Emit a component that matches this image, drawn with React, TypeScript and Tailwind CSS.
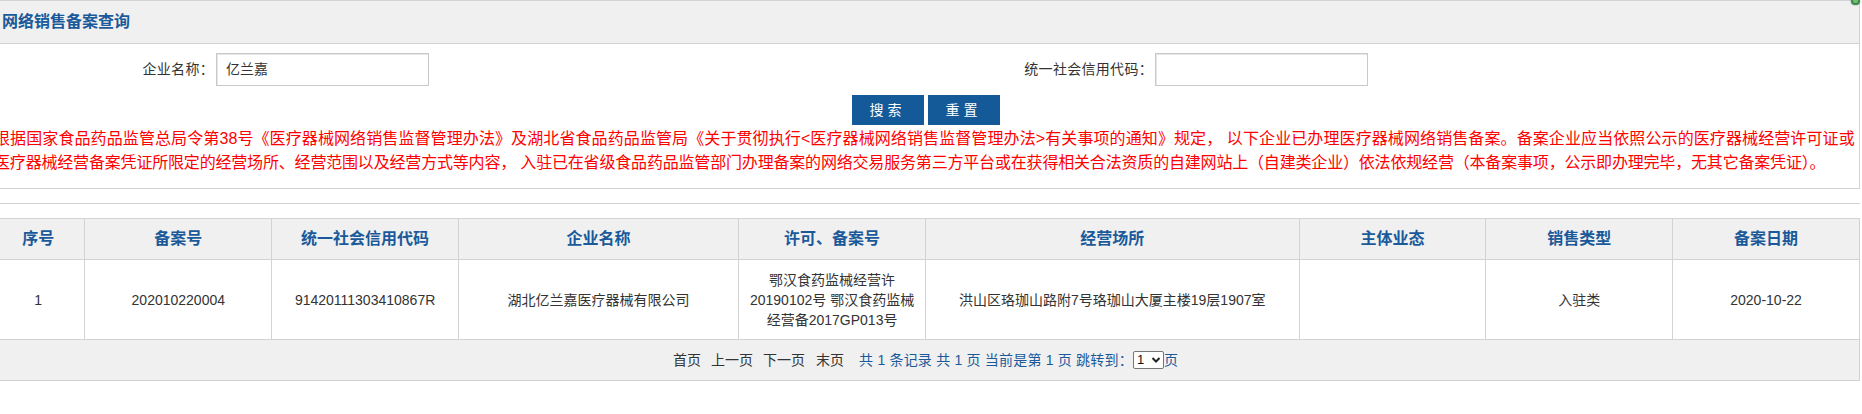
import React from "react";

const font = "font-['Liberation_Sans','Noto_Sans_CJK_SC',sans-serif]";

const columns = [
  { label: "序号", width: "w-[5%]" },
  { label: "备案号", width: "w-[10%]" },
  { label: "统一社会信用代码", width: "w-[10%]" },
  { label: "企业名称", width: "w-[15%]" },
  { label: "许可、备案号", width: "w-[10%]" },
  { label: "经营场所", width: "w-[20%]" },
  { label: "主体业态", width: "w-[10%]" },
  { label: "销售类型", width: "w-[10%]" },
  { label: "备案日期", width: "w-[10%]" },
];

function Field({ label, value, labelWidth }: { label: string; value?: string; labelWidth: string }) {
  return (
    <>
      <div className={`${labelWidth} shrink-0 pr-[2px] text-right text-[14px] leading-[33px] tracking-[0.3px] text-[#333]`}>{label}</div>
      <div className="flex h-[33px] w-[213px] shrink-0 items-center border border-[#c9c9c9] px-[9px] text-[14px] text-[#333] shadow-[inset_1px_1px_0_#e6e6e6]">
        {value}
      </div>
    </>
  );
}

function Pager() {
  return (
    <div className="flex items-center justify-center text-[14px] leading-[20px]">
      <span className="text-[#333]">首页</span>
      <span className="ml-[10px] text-[#333]">上一页</span>
      <span className="ml-[10px] text-[#333]">下一页</span>
      <span className="ml-[11px] text-[#333]">末页</span>
      <span className="ml-[15px] whitespace-pre tracking-[0.2px] text-[#1a5a9a]">共 1 条记录 共 1 页 当前是第 1 页 跳转到：</span>
      <span className="inline-flex h-[18px] w-[31px] items-center justify-between rounded-[2px] border border-[#767676] bg-white pl-[3px] pr-[2px] text-[13px] text-[#111]">
        1
        <svg width="10" height="8" viewBox="0 0 10 8" fill="none">
          <path d="M1.5 2 L5 5.5 L8.5 2" stroke="#222" strokeWidth="2" />
        </svg>
      </span>
      <span className="text-[#1a5a9a]">页</span>
    </div>
  );
}

export default function App() {
  return (
    <div className={`relative min-h-[414px] overflow-hidden bg-white ${font}`}>
      <div className="ml-[-9px] w-[1869px]">
        <section className="border border-[#d3d3d3]">
          <div className="flex h-[43px] items-center border-b border-[#d3d3d3] bg-[#f0f0f0] pl-[10px] text-[16px] font-bold text-[#1a5a9a]">
            网络销售备案查询
          </div>
          <div className="flex pt-[9px]">
            <Field label="企业名称：" value="亿兰嘉" labelWidth="w-[224px]" />
            <Field label="统一社会信用代码：" labelWidth="w-[726px]" />
          </div>
          <div className="mt-[9px] flex justify-center gap-[4px]">
            <button className="h-[30px] w-[72px] bg-[#155a98] text-[14px] tracking-[4px] text-white">搜索</button>
            <button className="h-[30px] w-[72px] bg-[#155a98] text-[14px] tracking-[4px] text-white">重置</button>
          </div>
          <p className="mt-[2px] whitespace-nowrap pb-[13px] pl-[2px] text-[16px] leading-[24px] text-[#ff0000]">
            <span className="tracking-[0.1px]">
              根据国家食品药品监管总局令第38号《医疗器械网络销售监督管理办法》及湖北省食品药品监管局《关于贯彻执行&lt;医疗器械网络销售监督管理办法&gt;有关事项的通知》规定， 以下企业已办理医疗器械网络销售备案。备案企业应当依照公示的医疗器械经营许可证或
            </span>
            <br />
            <span className="tracking-[-0.18px]">
              医疗器械经营备案凭证所限定的经营场所、经营范围以及经营方式等内容， 入驻已在省级食品药品监管部门办理备案的网络交易服务第三方平台或在获得相关合法资质的自建网站上（自建类企业）依法依规经营（本备案事项，公示即办理完毕，无其它备案凭证）。
            </span>
          </p>
        </section>
        <div className="mt-[14px] border-t border-[#d3d3d3]" />
        <table className="mt-[14px] w-full table-fixed border-collapse border border-[#d3d3d3]">
          <colgroup>
            {columns.map((c) => (
              <col key={c.label} className={c.width} />
            ))}
          </colgroup>
          <thead>
            <tr className="h-[41px] bg-[#f0f0f0]">
              {columns.map((c) => (
                <th key={c.label} className="border border-[#d3d3d3] p-0 text-center text-[16px] font-bold text-[#1a5a9a]">
                  {c.label}
                </th>
              ))}
            </tr>
          </thead>
          <tbody className="text-[14px] leading-[20px] text-[#333]">
            <tr className="h-[80px]">
              <td className="border border-[#d3d3d3] text-center">1</td>
              <td className="border border-[#d3d3d3] text-center">202010220004</td>
              <td className="border border-[#d3d3d3] text-center">91420111303410867R</td>
              <td className="border border-[#d3d3d3] text-center">湖北亿兰嘉医疗器械有限公司</td>
              <td className="border border-[#d3d3d3] text-center">
                鄂汉食药监械经营许
                <br />
                20190102号 鄂汉食药监械
                <br />
                经营备2017GP013号
              </td>
              <td className="border border-[#d3d3d3] text-center">洪山区珞珈山路附7号珞珈山大厦主楼19层1907室</td>
              <td className="border border-[#d3d3d3] text-center"></td>
              <td className="border border-[#d3d3d3] text-center">入驻类</td>
              <td className="border border-[#d3d3d3] text-center">2020-10-22</td>
            </tr>
            <tr className="h-[41px] bg-[#f0f0f0]">
              <td colSpan={9} className="border border-[#d3d3d3] p-0">
                <Pager />
              </td>
            </tr>
          </tbody>
        </table>
      </div>
      <span className="absolute right-[2px] top-[-3px] h-[8px] w-[9px] rounded-full border-[2px] border-[#3d8a4a] bg-[#6fbf73] shadow-[0_0_2px_#999]" />
    </div>
  );
}
